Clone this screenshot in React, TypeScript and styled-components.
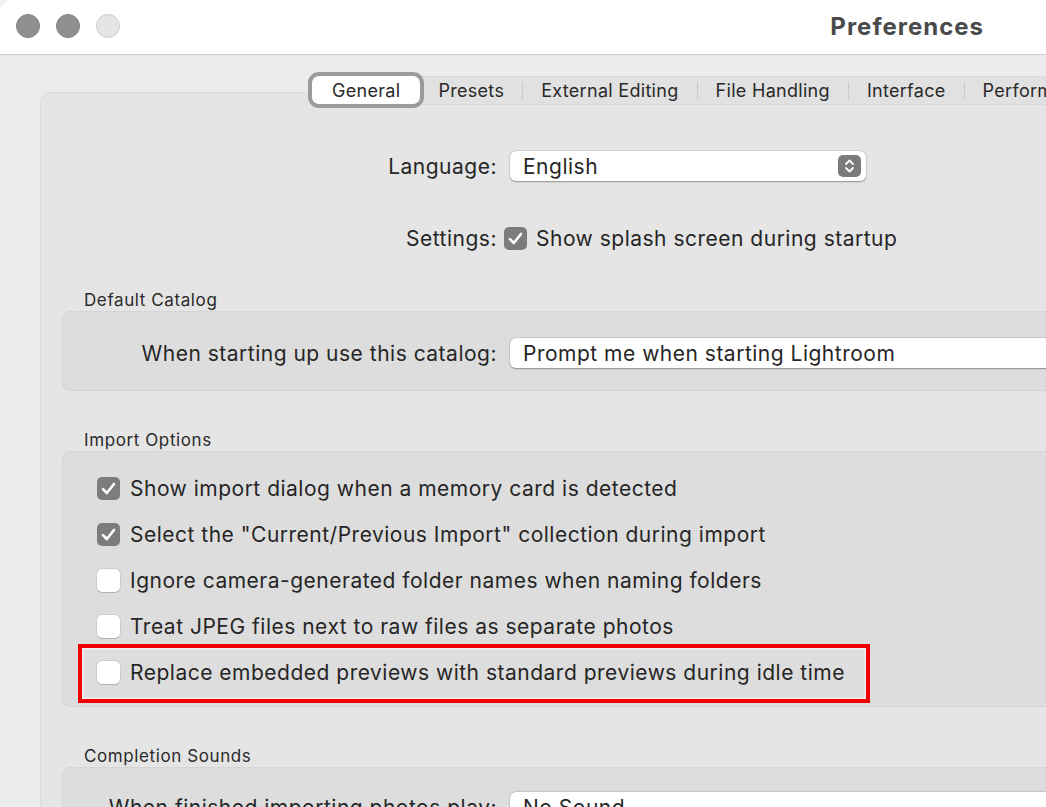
import React from 'react';
import styled, { createGlobalStyle } from 'styled-components';

const GlobalStyle = createGlobalStyle`
  html, body {
    margin: 0;
    padding: 0;
    background: #f2f2f2;
  }
  body {
    font-family: Inter, "Noto Sans", "Liberation Sans", sans-serif;
    color: #262626;
    -webkit-font-smoothing: antialiased;
  }
`;

const Window = styled.div`
  width: 1046px;
  height: 807px;
  overflow: hidden;
  background: #ececec;
  border-top-left-radius: 12px;
  display: flex;
  flex-direction: column;
`;

const TitleBar = styled.div`
  height: 55px;
  flex: none;
  background: #ffffff;
  border-bottom: 1px solid #cfcfcf;
  box-sizing: border-box;
  display: flex;
  align-items: center;
  padding: 0 62px 2px 16px;
`;

const Lights = styled.div`
  display: flex;
  gap: 16px;
`;

const Light = styled.span<{ $off?: boolean }>`
  width: 24px;
  height: 24px;
  border-radius: 50%;
  box-sizing: border-box;
  background: ${p => (p.$off ? '#e5e5e5' : '#8f8f8f')};
  border: 1px solid ${p => (p.$off ? '#cdcdcd' : '#838383')};
`;

const Title = styled.div`
  margin-left: auto;
  font-size: 24px;
  font-weight: 700;
  color: #4a4a4a;
  letter-spacing: 1px;
`;

const Body = styled.div`
  flex: 1;
  padding: 17px 0 0 40px;
  display: flex;
  flex-direction: column;
`;

const TabBar = styled.div`
  position: relative;
  z-index: 1;
  margin: 0 0 -16px 268px;
  height: 36px;
  display: flex;
  align-items: center;
`;

const TabTrack = styled.div`
  display: flex;
  align-items: center;
  height: 29px;
  margin-left: -4px;
  background: #e1e1e1;
  border-top: 1px solid #d9d9d9;
  border-bottom: 1px solid #d9d9d9;
  box-sizing: border-box;
  white-space: nowrap;
`;

const Tab = styled.div<{ $active?: boolean; $sep?: boolean }>`
  font-size: 18px;
  letter-spacing: 0.3px;
  color: #2a2a2a;
  display: flex;
  align-items: center;
  justify-content: center;
  box-sizing: border-box;
  ${p =>
    p.$active
      ? `
    position: relative;
    z-index: 1;
    height: 36px;
    padding: 0 20px;
    background: #ffffff;
    border: 4px solid #9b9b9f;
    border-radius: 11px;
  `
      : `
    height: 17px;
    padding: 0 18px;
  `}
  ${p => (p.$sep ? 'border-left: 1px solid #c9c9c9;' : '')}
`;

const Content = styled.div`
  flex: 1;
  margin-right: -300px;
  background: #e5e5e5;
  border: 1px solid #dcdcdc;
  border-radius: 10px 0 0 0;
  padding: 58px 0 0 21px;
  display: flex;
  flex-direction: column;
`;

const FormRow = styled.div<{ $gap?: number }>`
  height: 30px;
  display: flex;
  align-items: center;
  margin-top: ${p => p.$gap ?? 0}px;
  font-size: 21px;
  letter-spacing: 0.5px;
`;

const Label = styled.div<{ $width?: number }>`
  width: ${p => p.$width ?? 435}px;
  flex: none;
  text-align: right;
  white-space: nowrap;
`;

const Popup = styled.div<{ $width?: number }>`
  margin-left: 13px;
  width: ${p => (p.$width ? `${p.$width}px` : '900px')};
  height: 30px;
  flex: none;
  box-sizing: border-box;
  background: #ffffff;
  border-radius: 6px;
  box-shadow: 0 0.5px 1.5px rgba(0, 0, 0, 0.35), 0 0 0 0.5px rgba(0, 0, 0, 0.06);
  display: flex;
  align-items: center;
  padding: 0 5px 0 13px;
  white-space: nowrap;
`;

const Stepper = styled.span`
  margin-left: auto;
  width: 23px;
  height: 22px;
  border-radius: 5px;
  background: #7b7b7b;
  display: flex;
  align-items: center;
  justify-content: center;
`;

const Box = styled.span<{ $checked?: boolean }>`
  width: 23px;
  height: 23px;
  flex: none;
  box-sizing: border-box;
  border-radius: 5px;
  background: ${p => (p.$checked ? '#7c7c7c' : '#ffffff')};
  box-shadow: ${p =>
    p.$checked ? 'none' : '0 0 0 0.5px rgba(0,0,0,0.12), 0 0.5px 1px rgba(0,0,0,0.15)'};
  display: flex;
  align-items: center;
  justify-content: center;
`;

const SettingsBox = styled.div`
  margin-left: 7px;
  display: flex;
  align-items: center;
  gap: 9px;
  white-space: nowrap;
`;

const SectionTitle = styled.div<{ $gap: number }>`
  margin: ${p => p.$gap}px 0 1px 22px;
  height: 20px;
  line-height: 20px;
  font-size: 17px;
  letter-spacing: 0.6px;
  color: #2a2a2a;
`;

const Group = styled.div<{ $pt: number; $pb: number }>`
  background: #dddddd;
  border: 1px solid #d5d5d5;
  border-radius: 8px 0 0 8px;
  padding: ${p => p.$pt}px 0 ${p => p.$pb}px 0;
  display: flex;
  flex-direction: column;
`;

const CheckRow = styled.div<{ $highlight?: boolean }>`
  position: relative;
  height: 46px;
  display: flex;
  align-items: center;
  gap: 10px;
  padding-left: 34px;
  font-size: 21px;
  letter-spacing: 0.5px;
  white-space: nowrap;
  ${p =>
    p.$highlight
      ? `
    &::after {
      content: '';
      position: absolute;
      left: 15px;
      top: -5px;
      width: 792px;
      height: 59px;
      box-sizing: border-box;
      border: 4px solid #f20000;
      box-shadow: inset 0 0 0 1.5px rgba(255, 255, 255, 0.55);
      pointer-events: none;
    }
  `
      : ''}
`;

const Check = () => (
  <svg width="15" height="13" viewBox="0 0 15 13">
    <path d="M2 7.2 L5.8 11 L13 2" fill="none" stroke="#fff" strokeWidth="2.6" strokeLinecap="round" strokeLinejoin="round" />
  </svg>
);

const Checkbox = ({ checked }: { checked?: boolean }) => (
  <Box $checked={checked}>{checked && <Check />}</Box>
);

const Chevrons = () => (
  <svg width="11" height="16" viewBox="0 0 11 16">
    <path d="M2 6 L5.5 2.5 L9 6 M2 10 L5.5 13.5 L9 10" fill="none" stroke="#fff" strokeWidth="1.8" strokeLinecap="round" strokeLinejoin="round" />
  </svg>
);

const tabs = ['General', 'Presets', 'External Editing', 'File Handling', 'Interface', 'Performance'];

const imports = [
  { text: 'Show import dialog when a memory card is detected', checked: true },
  { text: 'Select the "Current/Previous Import" collection during import', checked: true },
  { text: 'Ignore camera-generated folder names when naming folders', checked: false },
  { text: 'Treat JPEG files next to raw files as separate photos', checked: false },
  { text: 'Replace embedded previews with standard previews during idle time', checked: false, highlight: true },
];

const App = () => (
  <>
    <GlobalStyle />
    <Window>
      <TitleBar>
        <Lights>
          <Light />
          <Light />
          <Light $off />
        </Lights>
        <Title>Preferences</Title>
      </TitleBar>
      <Body>
        <TabBar>
          <Tab $active>General</Tab>
          <TabTrack>
            {tabs.slice(1).map((t, i) => (
              <Tab key={t} $sep={i > 0}>
                {t}
              </Tab>
            ))}
          </TabTrack>
        </TabBar>
        <Content>
          <FormRow>
            <Label>Language:</Label>
            <Popup $width={356}>
              English
              <Stepper>
                <Chevrons />
              </Stepper>
            </Popup>
          </FormRow>
          <FormRow $gap={42}>
            <Label>Settings:</Label>
            <SettingsBox>
              <Checkbox checked />
              Show splash screen during startup
            </SettingsBox>
          </FormRow>

          <SectionTitle $gap={37}>Default Catalog</SectionTitle>
          <Group $pt={26} $pb={22}>
            <FormRow>
              <Label $width={434}>When starting up use this catalog:</Label>
              <Popup>Prompt me when starting Lightroom</Popup>
            </FormRow>
          </Group>

          <SectionTitle $gap={39}>Import Options</SectionTitle>
          <Group $pt={13} $pb={11}>
            {imports.map(r => (
              <CheckRow key={r.text} $highlight={r.highlight}>
                <Checkbox checked={r.checked} />
                {r.text}
              </CheckRow>
            ))}
          </Group>

          <SectionTitle $gap={39}>Completion Sounds</SectionTitle>
          <Group $pt={24} $pb={20}>
            <FormRow>
              <Label $width={434}>When finished importing photos play:</Label>
              <Popup>No Sound</Popup>
            </FormRow>
          </Group>
        </Content>
      </Body>
    </Window>
  </>
);

export default App;
